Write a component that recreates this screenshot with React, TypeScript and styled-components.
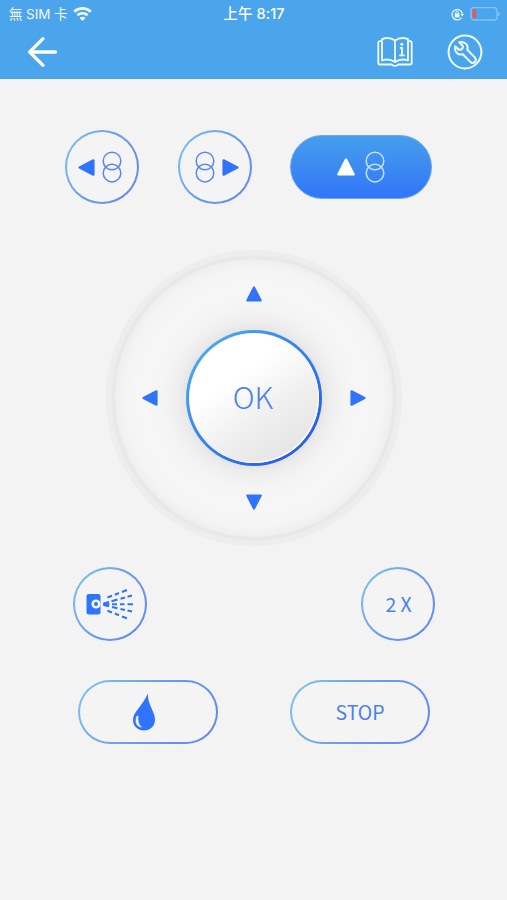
import React from "react";
import styled, { createGlobalStyle, css } from "styled-components";

const BLUE = "#2f74fa";

const GlobalStyle = createGlobalStyle`
  * { box-sizing: border-box; }
  html, body { margin: 0; padding: 0; background: #f3f3f3; }
  button { margin: 0; padding: 0; font: inherit; border: 0; background: none; }
  svg { display: block; flex: none; }
`;

const Screen = styled.div`
  width: 507px;
  height: 900px;
  overflow: hidden;
  display: flex;
  flex-direction: column;
  background: #f3f3f3;
  font-family: "Noto Sans CJK TC", "Noto Sans", sans-serif;
  color: #4a80ee;
`;

const Header = styled.header`
  height: 79px;
  flex: none;
  background: #4ba5ec;
  color: #fff;
`;

const StatusBar = styled.div`
  height: 28px;
  display: grid;
  grid-template-columns: 1fr auto 1fr;
  align-items: center;
  padding: 0 7px 0 9px;
  font-family: Inter, "Noto Sans CJK TC", sans-serif;
  font-size: 13.5px;
  line-height: 20px;
`;

const Carrier = styled.div`
  display: flex;
  align-items: center;
  gap: 6px;
  opacity: 0.92;
  white-space: nowrap;
  letter-spacing: -0.1px;
`;

const Clock = styled.div`
  font-weight: 500;
  font-size: 14.5px;
  letter-spacing: 0.1px;
  padding-right: 1px;
  white-space: nowrap;
`;

const StatusIcons = styled.div`
  display: flex;
  justify-content: flex-end;
  align-items: center;
  gap: 6px;
`;

const NavBar = styled.nav`
  height: 51px;
  display: flex;
  align-items: center;
  padding: 0 24px 3px 27px;
`;

const IconButton = styled.button`
  color: #fff;
  &:first-child { margin-right: auto; }
  & + &:last-child { margin-left: 34px; }
`;

const TopRow = styled.div`
  display: flex;
  align-items: center;
  margin: 51px 0 0 65px;
`;

const outline = css`
  border: 2px solid transparent;
  background:
    linear-gradient(#f4f4f5, #f4f4f5) padding-box,
    linear-gradient(120deg, #7fc5ec 0%, #6d9dea 48%, #5f86ef 100%) border-box;
`;

const ControlButton = styled.button<{
  $shape: "circle" | "pill";
  $filled?: boolean;
  $gap?: number;
  $nudge?: number;
}>`
  flex: none;
  width: ${(p) => (p.$shape === "circle" ? 74 : p.$filled ? 142 : 140)}px;
  height: ${(p) => (p.$shape === "circle" ? 74 : 64)}px;
  border-radius: 37px;
  display: flex;
  align-items: center;
  justify-content: center;
  gap: ${(p) => p.$gap ?? 0}px;
  padding-right: ${(p) => Math.max(0, -(p.$nudge ?? 0) * 2)}px;
  padding-left: ${(p) => Math.max(0, (p.$nudge ?? 0) * 2)}px;
  color: #4a80ee;
  ${(p) =>
    p.$filled
      ? css`
          border: 1px solid #6aa8f0;
          background: linear-gradient(#469eec, #3176f8);
        `
      : outline}
`;

const CircleCell = styled.div<{ $after: number }>`
  margin-right: ${(p) => p.$after}px;
`;

const Dial = styled.div`
  align-self: center;
  flex: none;
  width: 296px;
  height: 296px;
  margin: 46px 0 0 1px;
  padding: 36px;
  border-radius: 50%;
  display: grid;
  grid-template-columns: 16px 1fr 16px;
  grid-template-rows: 16px 1fr 16px;
  place-items: center;
  background: radial-gradient(
    circle at center,
    #e4e4e4 0,
    #e4e4e4 67px,
    #ebebeb 73px,
    #f0f0f0 80px,
    #f4f4f4 90px,
    #f6f6f6 103px,
    #f6f6f6 116px,
    #f4f4f4 130px,
    #efefef 138px,
    #e6e6e6 140.5px,
    #ebebeb 142px,
    #eeeeee 145px,
    #ececec 148px
  );
`;

const Direction = styled.button<{ $col: number; $row: number }>`
  grid-column: ${(p) => p.$col};
  grid-row: ${(p) => p.$row};
`;

const OkButton = styled.button`
  grid-column: 2;
  grid-row: 2;
  width: 136px;
  height: 136px;
  border-radius: 50%;
  border: 3px solid transparent;
  background:
    linear-gradient(145deg, #ffffff 35%, #efefef 62%, #e0e0e0 100%) padding-box,
    linear-gradient(135deg, #4faaf0 10%, #3585ee 45%, #285fec 85%) border-box;
  box-shadow: inset -1px -1px 1px #fff;
  color: #4a80ee;
  font-size: 30px;
  font-weight: 300;
  line-height: 40px;
  padding: 0 2px 4px 0;
`;

const LowerRow = styled.div<{ $top: number; $left: number; $right: number }>`
  display: flex;
  justify-content: space-between;
  margin: ${(p) => p.$top}px ${(p) => p.$right}px 0 ${(p) => p.$left}px;
`;

const Label = styled.span`
  font-size: 19.4px;
  line-height: 24px;
  white-space: pre;
`;

const TRIANGLES = {
  up: "M8.5 2 L15.2 15 H1.8Z",
  down: "M8.5 15 L15.2 2 H1.8Z",
  left: "M2 8.5 L15 1.8 V15.2Z",
  right: "M15 8.5 L2 1.8 V15.2Z",
};

function Triangle({ dir, size = 16, color = BLUE }: { dir: keyof typeof TRIANGLES; size?: number; color?: string }) {
  return (
    <svg width={size} height={size} viewBox="0.5 0.5 16 16">
      <path d={TRIANGLES[dir]} fill={color} stroke={color} strokeWidth="2.2" strokeLinejoin="round" />
    </svg>
  );
}

function Rings({ color = "#5b88ed" }: { color?: string }) {
  return (
    <svg width="20" height="32" viewBox="0 0 20 32" fill="none" stroke={color} strokeWidth="1.5">
      <circle cx="10" cy="10" r="8.8" />
      <circle cx="10" cy="22.1" r="8.8" />
    </svg>
  );
}

function Wifi() {
  return (
    <svg width="19" height="15" viewBox="0 0 19 15" fill="none" stroke="#fff" strokeWidth="2.6">
      <path d="M1.2 4.7 C5.8 0.2 13.2 0.2 17.8 4.7" />
      <path d="M4.4 8.2 C7.2 5.5 11.8 5.5 14.6 8.2" />
      <path d="M9.5 13.9 L6.5 11 C8.1 9.3 10.9 9.3 12.5 11Z" fill="#fff" stroke="none" />
    </svg>
  );
}

function RotationLock() {
  return (
    <svg width="13" height="13" viewBox="0 0 13 13" fill="none" stroke="#e4f7ff" strokeWidth="1.3">
      <path d="M10.5 9.7 A5.2 5.2 0 1 1 11.2 5.2" />
      <path d="M9.3 5.7 H13 L11.3 8.4Z" fill="#e4f7ff" stroke="none" />
      <rect x="3.7" y="5.6" width="4.8" height="3.8" rx=".5" fill="#e4f7ff" stroke="none" />
      <path d="M4.8 6 V4.8 C4.8 3 7.4 3 7.4 4.8 V6" strokeWidth="1" />
    </svg>
  );
}

function Battery() {
  return (
    <svg width="30" height="15" viewBox="0 0 30 15" fill="none">
      <rect x="1" y="0.5" width="26" height="12.5" rx="3.2" stroke="#82c4f5" strokeWidth="1.4" />
      <path d="M28.2 4.7 C30.3 5.5 30.3 8.3 28.2 9Z" fill="#82c4f5" />
      <rect x="2.5" y="2.3" width="3.6" height="9" rx="1.3" fill="#e95950" />
    </svg>
  );
}

function BackArrow() {
  return (
    <svg width="32" height="32" viewBox="0 0 32 32" fill="none" stroke="#fff" strokeWidth="3.3" strokeLinecap="round" strokeLinejoin="round">
      <path d="M28.5 16 H3 M16 2.7 L2.7 16 L16 29.3" />
    </svg>
  );
}

function Manual() {
  return (
    <svg width="36" height="32" viewBox="0 0 36 32" fill="none" stroke="#f2fcff" strokeWidth="1.8" strokeLinejoin="round">
      <path d="M18 4.5 C14 1.7 9 1.5 5 3.2 V24.5 C9 23 14 23.3 18 26 C22 23.3 27 23 31 24.5 V3.2 C27 1.5 22 1.7 18 4.5Z" />
      <path d="M18 4.5 V26" />
      <path d="M4.8 5.2 H3 Q1.3 5.2 1.3 7 V27 Q1.3 28.5 3 28.5 H14.7 C15.8 30.3 20.2 30.3 21.3 28.5 H33 Q34.7 28.5 34.7 27 V7 Q34.7 5.2 33 5.2 H31.2" />
      <path d="M22.8 11.8 H25 V19.2 M22.3 19.3 H27.6" strokeWidth="1.8" />
      <circle cx="24.8" cy="8.2" r="1.5" fill="#f2fcff" stroke="none" />
    </svg>
  );
}

function Wrench() {
  return (
    <svg width="36" height="36" viewBox="0 0 36 36" fill="none" stroke="#f2fcff" strokeWidth="2" strokeLinejoin="round">
      <circle cx="18" cy="18" r="16.4" />
      <path d="M12.2 8.2 C18.2 6.9 21.8 11.4 20.3 15.8 L27.8 23.4 C30.6 26.8 26.7 30.6 23.4 27.9 L15.8 20.3 C11.3 21.6 7.1 18.1 8.2 12.3 L12 15.8 C14.4 16.2 16.4 14.3 15.8 12Z" />
    </svg>
  );
}

function Spray() {
  return (
    <svg width="48" height="34" viewBox="0 0 48 34">
      <rect x="0.5" y="7" width="14" height="20.5" rx="2.3" fill={BLUE} />
      <circle cx="10" cy="17" r="4.6" fill="#f4f4f5" />
      <circle cx="10" cy="17" r="2" fill={BLUE} />
      <g stroke={BLUE} strokeWidth="2.1" fill="none">
        <path d="M17.5 16.4 L23 14.9 M25.5 14.2 L31.5 12.5 M34.5 11.7 L39 10.4 M41.5 9.7 L46 8.4" />
        <path d="M17 17.2 H23.5 M26 17.2 H31 M34 17.2 H38.5 M41.5 17.2 H47" />
        <path d="M17.5 18 L23 19.2 M26 19.9 L31.5 21.2 M34.5 21.9 L39 22.9 M41.5 23.5 L46 24.6" />
        <path d="M21.5 10.5 L26 8.8 M28.8 7.7 L33 6.1 M36 5 L41 3.1" />
        <path d="M21.5 23.8 L26 25.5 M28.8 26.6 L33 28.2 M36 29.4 L41 31.3" />
      </g>
    </svg>
  );
}

function Drop() {
  return (
    <svg width="24" height="40" viewBox="0 0 24 40">
      <path d="M16 1.5 C15 12 23 19 23 27.8 C23 34.2 18.1 38.5 12 38.5 C5.8 38.5 1 34.2 1 28 C1 20 10 14.5 16 1.5Z" fill={BLUE} />
      <path d="M4.9 24 C2.4 30 4.8 34.8 9.4 35.2 C6.5 32.5 5.6 29 6.1 24.2Z" fill="#f4f4f5" stroke="#f4f4f5" strokeWidth=".5" />
    </svg>
  );
}

export default function App() {
  return (
    <Screen>
      <GlobalStyle />
      <Header>
        <StatusBar>
          <Carrier>
            <span>無 SIM 卡</span>
            <Wifi />
          </Carrier>
          <Clock>上午 8:17</Clock>
          <StatusIcons>
            <RotationLock />
            <Battery />
          </StatusIcons>
        </StatusBar>
        <NavBar>
          <IconButton aria-label="Back"><BackArrow /></IconButton>
          <IconButton aria-label="Manual"><Manual /></IconButton>
          <IconButton aria-label="Settings"><Wrench /></IconButton>
        </NavBar>
      </Header>

      <TopRow>
        <CircleCell $after={39}>
          <ControlButton $shape="circle" $gap={7} $nudge={-2} aria-label="Left">
            <Triangle dir="left" size={17} />
            <Rings />
          </ControlButton>
        </CircleCell>
        <CircleCell $after={38}>
          <ControlButton $shape="circle" $gap={7} $nudge={1.5} aria-label="Right">
            <Rings />
            <Triangle dir="right" size={17} />
          </ControlButton>
        </CircleCell>
        <ControlButton $shape="pill" $filled $gap={10} aria-label="Up">
          <Triangle dir="up" size={18} color="#fff" />
          <Rings color="#c2e2ff" />
        </ControlButton>
      </TopRow>

      <Dial>
        <Direction $col={2} $row={1} aria-label="Up"><Triangle dir="up" /></Direction>
        <Direction $col={1} $row={2} aria-label="Left"><Triangle dir="left" /></Direction>
        <OkButton>OK</OkButton>
        <Direction $col={3} $row={2} aria-label="Right"><Triangle dir="right" /></Direction>
        <Direction $col={2} $row={3} aria-label="Down"><Triangle dir="down" /></Direction>
      </Dial>

      <LowerRow $top={21} $left={73} $right={72}>
        <ControlButton $shape="circle" aria-label="Spray"><Spray /></ControlButton>
        <ControlButton $shape="circle" $nudge={0.5}><Label>2 X</Label></ControlButton>
      </LowerRow>
      <LowerRow $top={39} $left={78} $right={77}>
        <ControlButton $shape="pill" $nudge={-4} aria-label="Water"><Drop /></ControlButton>
        <ControlButton $shape="pill"><Label>STOP</Label></ControlButton>
      </LowerRow>
    </Screen>
  );
}
